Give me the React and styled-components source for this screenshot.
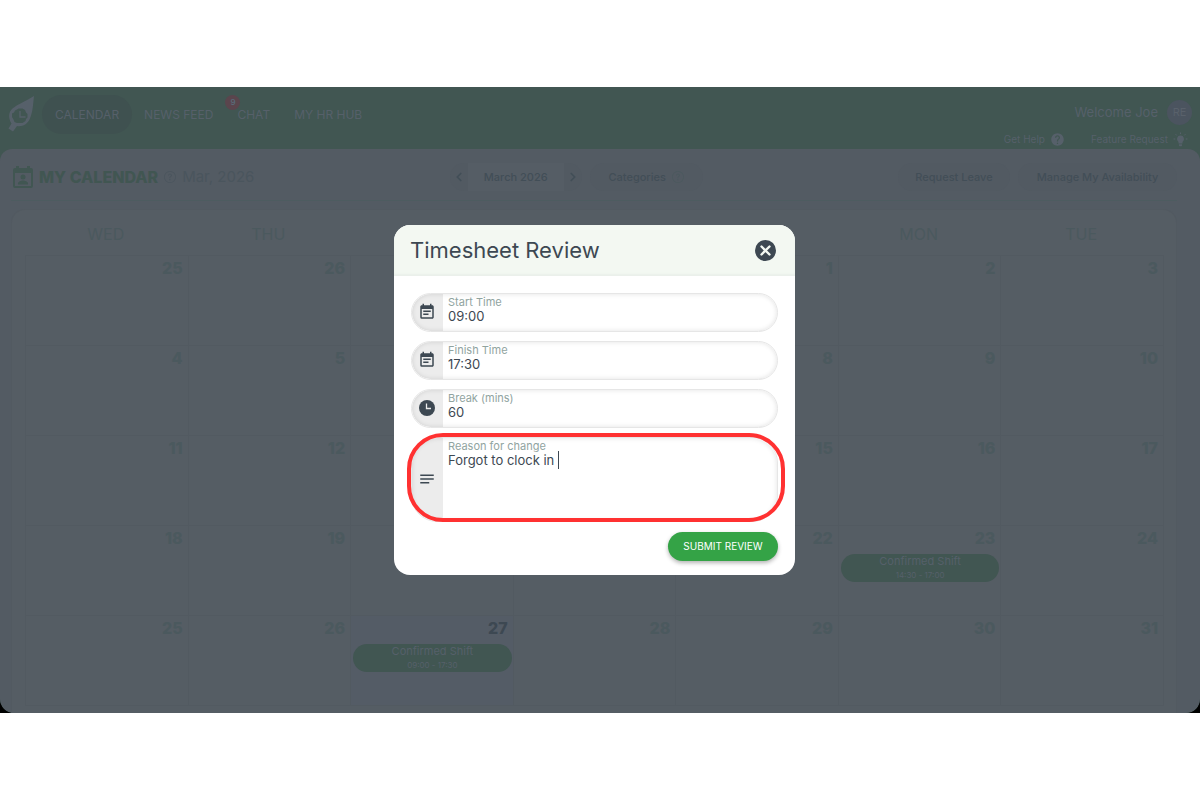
import React from "react";
import styled, { createGlobalStyle, css } from "styled-components";
import { ChevronLeft, ChevronRight } from "lucide-react";
import { MdEventNote, MdNotes, MdHelp } from "react-icons/md";
import { BsQuestionCircle } from "react-icons/bs";

const c = {
  brand: "#415652",
  brandDark: "#3f5150",
  panel: "#535b63",
  card: "#555d64",
  line: "#525a61",
  rule: "#4d5c60",
  onBrand: "#56606a",
  muted: "#4b595e",
  faint: "#4a555d",
  ink: "#424e57",
  dark: "#3d4852",
};

const Global = createGlobalStyle`
  * { box-sizing: border-box; }
  body { margin: 0; background: #fff; font-family: Inter, sans-serif; color: ${c.ink}; }
  button, input, textarea { font: inherit; color: inherit; border: 0; background: none; padding: 0; margin: 0; outline: 0; }
  a { color: inherit; text-decoration: none; }
  svg { display: block; flex: none; }
`;

const Page = styled.div`
  padding: 87px 0;
`;
const Backdrop = styled.div`
  position: relative;
  background: #000;
`;
const Shell = styled.div`
  background: ${c.brand};
  border-radius: 0 0 14px 14px;
  overflow: hidden;
`;
const Header = styled.header`
  display: flex;
  justify-content: space-between;
  height: 62px;
  padding: 8px 8px 0;
  color: ${c.onBrand};
`;
const Nav = styled.nav`
  display: flex;
  align-items: flex-start;
  font-size: 12px;
  line-height: 39px;
`;
const Logo = styled.a`
  margin-right: 6px;
`;
const NavLink = styled.a`
  position: relative;
  padding: 0 12px;
  border-radius: 20px;
  ${(p) => p.$active && css`
    padding: 0 13px;
    background: ${c.brandDark};
  `}
`;
const Badge = styled.span`
  position: absolute;
  top: 0;
  left: 0;
  width: 15px;
  height: 15px;
  border-radius: 50%;
  background: #5a454d;
  color: #586a78;
  font-size: 8px;
  font-weight: 600;
  line-height: 15px;
  text-align: center;
`;
const Account = styled.div`
  display: flex;
  flex-direction: column;
  align-items: flex-end;
  padding-top: 4px;
`;
const Welcome = styled.div`
  display: flex;
  align-items: center;
  gap: 9px;
  font-size: 13px;
  line-height: 26px;
`;
const Avatar = styled.span`
  width: 25px;
  height: 25px;
  border-radius: 50%;
  background: #4b545f;
  color: #59616b;
  font-size: 11px;
  line-height: 25px;
  text-align: center;
`;
const HelpLinks = styled.div`
  display: flex;
  gap: 26px;
  padding: 6px 4px 0 0;
  font-size: 10px;
  line-height: 16px;
`;
const HelpLink = styled.a`
  display: flex;
  align-items: center;
  gap: 5px;
`;
const Panel = styled.main`
  padding: 0 23px 0 11px;
  background: ${c.panel};
  border-radius: 12px 12px 14px 14px;
`;
const Toolbar = styled.div`
  display: flex;
  align-items: center;
  justify-content: space-between;
  height: 52px;
  padding: 4px 0 0 2px;
  border-bottom: 1px solid ${c.rule};
`;
const TitleGroup = styled.div`
  display: flex;
  align-items: center;
  gap: 6px;
  color: ${c.faint};
  font-size: 15px;
`;
const Title = styled.h1`
  margin: 0;
  color: ${c.brand};
  font-size: 16px;
  font-weight: 800;
  line-height: 24px;
`;
const Controls = styled.div`
  display: flex;
  align-items: center;
  gap: 8px;
  font-size: 11px;
  font-weight: 500;
  line-height: 28px;
`;
const MonthPicker = styled.div`
  display: flex;
  border-radius: 14px;
  overflow: hidden;
`;
const Step = styled.button`
  display: flex;
  align-items: center;
  justify-content: center;
  width: 18px;
  height: 28px;
  background: #525a62;
`;
const Month = styled.span`
  width: 96px;
  background: #555d65;
  text-align: center;
`;
const Pill = styled.button`
  display: flex;
  align-items: center;
  justify-content: center;
  gap: 6px;
  width: ${(p) => p.$width}px;
  height: 28px;
  border-radius: 14px;
  background: #525a62;
  svg { color: ${c.muted}; }
`;
const Card = styled.section`
  margin-top: 8px;
  padding: 0 12px 7px 13px;
  background: ${c.card};
  border: 1px solid ${c.line};
  border-bottom: 0;
  border-radius: 14px 14px 0 0;
`;
const Calendar = styled.table`
  width: 100%;
  table-layout: fixed;
  border-collapse: collapse;
  color: ${c.muted};
`;
const DayName = styled.th`
  height: 45px;
  padding: 4px 2px 0 0;
  font-size: 16px;
  font-weight: 400;
`;
const Day = styled.td`
  height: 90px;
  padding: 2px 1px 0 2px;
  vertical-align: top;
  border: 1px solid ${c.line};
  ${(p) => p.$today && css`
    background: #545c66;
    color: ${c.dark};
  `}
`;
const DayNumber = styled.div`
  padding-right: 4px;
  font-size: 16px;
  font-weight: 800;
  line-height: 20px;
  text-align: right;
`;
const Shift = styled.a`
  display: block;
  height: 28px;
  margin-top: 6px;
  border-radius: 14px;
  background: ${c.brand};
  color: ${c.onBrand};
  font-size: 11px;
  line-height: 15px;
  text-align: center;
`;
const ShiftTime = styled.small`
  display: block;
  font-size: 8px;
  line-height: 13px;
`;
const Overlay = styled.div`
  position: absolute;
  inset: 0;
  display: flex;
  align-items: center;
  justify-content: center;
  padding-right: 11px;
`;
const Dialog = styled.form`
  width: 401px;
  border-radius: 16px;
  background: #fff;
  overflow: hidden;
`;
const DialogHeader = styled.div`
  display: flex;
  align-items: center;
  justify-content: space-between;
  height: 51px;
  padding: 0 19px 0 16px;
  background: #f3f8f2;
  box-shadow: inset 0 -2px 2px #eaf0ea;
`;
const DialogTitle = styled.h2`
  margin: 0;
  color: ${c.dark};
  font-size: 22px;
  font-weight: 400;
  line-height: 30px;
`;
const Close = styled.button`
  color: ${c.dark};
`;
const Fields = styled.div`
  display: flex;
  flex-direction: column;
  gap: 9px;
  padding: 17px 17px 0;
`;
const Field = styled.div`
  position: relative;
  display: flex;
  height: ${(p) => (p.$tall ? 85 : 39)}px;
`;
const FieldBox = styled.div`
  display: flex;
  flex: 1;
  border: 1px solid #e6e6e6;
  border-radius: ${(p) => (p.$tall ? 26 : 20)}px;
  overflow: hidden;
  position: relative;
  &::after {
    content: "";
    position: absolute;
    inset: 0;
    border-radius: inherit;
    box-shadow: inset 0 0 5px rgba(0, 0, 0, 0.12);
    pointer-events: none;
  }
`;
const FieldIcon = styled.span`
  display: flex;
  align-items: center;
  justify-content: center;
  width: 31px;
  padding-right: 1px;
  background: #ececec;
  color: ${c.dark};
`;
const FieldText = styled.div`
  display: flex;
  flex: 1;
  flex-direction: column;
  padding: 2px 5px 0;
  min-width: 0;
`;
const Label = styled.label`
  color: #91a49f;
  font-size: 11px;
  line-height: 13px;
`;
const valueText = css`
  width: 100%;
  color: ${c.dark};
  font-size: 13px;
  line-height: 15px;
`;
const Input = styled.input`
  ${valueText}
  height: 15px;
`;
const TextArea = styled.textarea`
  ${valueText}
  height: 60px;
  resize: none;
`;
const Caret = styled.span`
  position: absolute;
  top: 14px;
  left: 147px;
  width: 1px;
  height: 18px;
  background: ${c.dark};
`;
const Highlight = styled.span`
  position: absolute;
  inset: -4px -7px 0 -4px;
  border: 4px solid #ff3131;
  border-radius: 36px;
  pointer-events: none;
`;
const Actions = styled.div`
  display: flex;
  justify-content: flex-end;
  padding: 10px 17px 14px;
`;
const Submit = styled.button`
  width: 110px;
  height: 29px;
  border-radius: 15px;
  background: #34a346;
  color: #fff;
  font-size: 10px;
  font-weight: 400;
  box-shadow: 0 2px 4px rgba(0, 0, 0, 0.3);
`;

const LogoMark = () => (
  <svg width="28" height="38" viewBox="0 0 28 38" fill="currentColor">
    <path
      fillRule="evenodd"
      d="M26 1C25 9 25 17 21.500 24.500C19 29.500 14 32 9 31L5 36.500L0.500 33.500L3.500 28.500C0 23 0.500 17 4.500 13.500C10 9 18 6 26 1ZM9 14.500L7 15.500L6 17.500L4 18.500V22L5.500 24.500L6.500 27L9 28H14.500L17.500 26L18 24L19.500 22.500V19L18 17.500L17 15L14.500 13.500H10.500Z"
    />
    <path d="M12 16v6h5.500" fill="none" stroke="currentColor" strokeWidth="1.300" />
  </svg>
);

const Bulb = () => (
  <svg width="15" height="15" viewBox="0 0 15 15" fill="currentColor">
    <path d="M7.500 3.500a3.500 3.500 0 0 1 2 6.400V11.500h-4V9.900a3.500 3.500 0 0 1 2-6.400ZM6 12.300h3v1.200a.7.7 0 0 1-.7.700H6.700a.7.7 0 0 1-.7-.7Z" />
    <path d="M7.500 .5v1.600M2.600 2.200l1.100 1.200M12.400 2.200l-1.100 1.200M.5 7h1.800M12.700 7h1.800" stroke="currentColor" strokeWidth="1" />
  </svg>
);

const CalendarPerson = () => (
  <svg width="20" height="22" viewBox="0 0 20 22" fill={c.brand}>
    <path
      fillRule="evenodd"
      d="M3 0h3v2h8V0h3v2h1a2 2 0 0 1 2 2v16a2 2 0 0 1-2 2H2a2 2 0 0 1-2-2V4a2 2 0 0 1 2-2h1ZM2 7v13h16V7Z"
    />
    <circle cx="10" cy="11" r="2.500" />
    <path d="M5 18.500v-1c0-2 3-3 5-3s5 1 5 3v1Z" />
  </svg>
);

const Clock = () => (
  <svg width="16" height="16" viewBox="0 0 16 16">
    <circle cx="8" cy="8" r="8" fill={c.dark} />
    <path d="M7.500 3.500v5H12" fill="none" stroke="#ececec" strokeWidth="1.300" />
  </svg>
);

const CloseMark = () => (
  <svg width="21" height="21" viewBox="0 0 21 21">
    <circle cx="10.500" cy="10.500" r="10.500" fill="currentColor" />
    <path d="M6.500 6.500l8 8M14.500 6.500l-8 8" stroke="#f3f8f2" strokeWidth="2.400" strokeLinecap="round" />
  </svg>
);

const NoteIcon = () => <MdEventNote size={18} />;

const dayNames = ["WED", "THU", "FRI", "SAT", "SUN", "MON", "TUE"];
const weeks = [
  [25, 26, 27, 28, 1, 2, 3],
  [4, 5, 6, 7, 8, 9, 10],
  [11, 12, 13, 14, 15, 16, 17],
  [18, 19, 20, 21, 22, 23, 24],
  [25, 26, 27, 28, 29, 30, 31],
];
const shifts = { "3-5": "14:30 - 17:00", "4-2": "09:00 - 17:30" };

const fields = [
  { id: "start", label: "Start Time", value: "09:00", Icon: NoteIcon },
  { id: "finish", label: "Finish Time", value: "17:30", Icon: NoteIcon },
  { id: "break", label: "Break (mins)", value: "60", Icon: Clock },
];

export default function App() {
  return (
    <Page>
      <Global />
      <Backdrop>
        <Shell>
          <Header>
            <Nav>
              <Logo href="#" aria-label="Home"><LogoMark /></Logo>
              <NavLink href="#" $active>CALENDAR</NavLink>
              <NavLink href="#">NEWS FEED</NavLink>
              <NavLink href="#">CHAT<Badge>9</Badge></NavLink>
              <NavLink href="#">MY HR HUB</NavLink>
            </Nav>
            <Account>
              <Welcome>Welcome Joe<Avatar>RE</Avatar></Welcome>
              <HelpLinks>
                <HelpLink href="#">Get Help<MdHelp size={15} /></HelpLink>
                <HelpLink href="#">Feature Request<Bulb /></HelpLink>
              </HelpLinks>
            </Account>
          </Header>
          <Panel>
            <Toolbar>
              <TitleGroup>
                <CalendarPerson />
                <Title>MY CALENDAR</Title>
                <BsQuestionCircle size={12} />
                <span>Mar, 2026</span>
              </TitleGroup>
              <Controls>
                <MonthPicker>
                  <Step type="button" aria-label="Previous month"><ChevronLeft size={14} strokeWidth={3} /></Step>
                  <Month>March 2026</Month>
                  <Step type="button" aria-label="Next month"><ChevronRight size={14} strokeWidth={3} /></Step>
                </MonthPicker>
                <Pill type="button" $width={113}>Categories<BsQuestionCircle size={12} /></Pill>
              </Controls>
              <Controls>
                <Pill type="button" $width={112}>Request Leave</Pill>
                <Pill type="button" $width={159}>Manage My Availability</Pill>
              </Controls>
            </Toolbar>
            <Card>
              <Calendar>
                <thead>
                  <tr>{dayNames.map((d) => <DayName key={d} scope="col">{d}</DayName>)}</tr>
                </thead>
                <tbody>
                  {weeks.map((week, w) => (
                    <tr key={w}>
                      {week.map((day, d) => {
                        const time = shifts[`${w}-${d}`];
                        return (
                          <Day key={d} $today={w === 4 && d === 2}>
                            <DayNumber>{day}</DayNumber>
                            {time && <Shift href="#">Confirmed Shift<ShiftTime>{time}</ShiftTime></Shift>}
                          </Day>
                        );
                      })}
                    </tr>
                  ))}
                </tbody>
              </Calendar>
            </Card>
          </Panel>
        </Shell>
        <Overlay>
          <Dialog role="dialog" aria-labelledby="dialog-title">
            <DialogHeader>
              <DialogTitle id="dialog-title">Timesheet Review</DialogTitle>
              <Close type="button" aria-label="Close"><CloseMark /></Close>
            </DialogHeader>
            <Fields>
              {fields.map(({ id, label, value, Icon }) => (
                <Field key={id}>
                  <FieldBox>
                    <FieldIcon><Icon /></FieldIcon>
                    <FieldText>
                      <Label htmlFor={id}>{label}</Label>
                      <Input id={id} defaultValue={value} />
                    </FieldText>
                  </FieldBox>
                </Field>
              ))}
              <Field $tall>
                <FieldBox $tall>
                  <FieldIcon><MdNotes size={18} /></FieldIcon>
                  <FieldText>
                    <Label htmlFor="reason">Reason for change</Label>
                    <TextArea id="reason" defaultValue="Forgot to clock in" />
                  </FieldText>
                </FieldBox>
                <Caret />
                <Highlight />
              </Field>
            </Fields>
            <Actions>
              <Submit type="submit">SUBMIT REVIEW</Submit>
            </Actions>
          </Dialog>
        </Overlay>
      </Backdrop>
    </Page>
  );
}
